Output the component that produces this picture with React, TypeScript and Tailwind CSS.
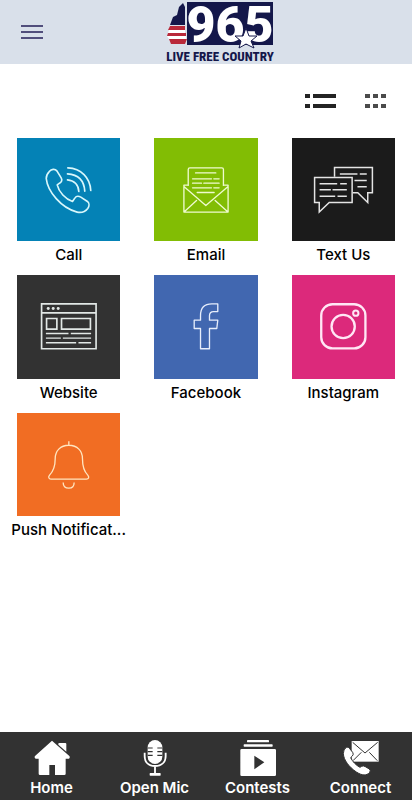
import type { ReactNode } from "react";

type Tile = { label: string; color: string; icon: ReactNode };
type Tab = { label: string; icon: ReactNode };

const tiles: Tile[] = [
  {
    label: "Call",
    color: "bg-[#0482b6]",
    icon: (
      <svg viewBox="51 21 311 311" className="size-full" fill="none" stroke="#d9f7fb" strokeWidth="5" strokeLinecap="round" strokeLinejoin="round" aria-hidden="true">
        <path d="M148 122C155 114 165 113 171 120L184 141C188 148 185 154 179 157L172 162C177 184 197 205 218 212L225 202C229 196 236 195 243 199L263 212C269 217 269 226 264 233C256 243 245 247 232 244C184 232 143 182 139 143C139 133 142 128 148 122Z" />
        <path d="M203 147C223 149 236 162 237 182M203 129C235 131 253 150 255 181M204 111C244 113 271 140 273 179" />
      </svg>
    ),
  },
  {
    label: "Email",
    color: "bg-[#82bd04]",
    icon: (
      <svg viewBox="42 21 311 311" className="size-full" fill="none" stroke="#effbcf" strokeWidth="4" strokeLinecap="round" strokeLinejoin="round" aria-hidden="true">
        <path d="M145 163V116Q145 111 150 111H246Q251 111 251 116V163" />
        <path d="M145 163L132 163V244H265V163H251M132 167L198 224L265 167M134 242L170 209M263 242L226 209" />
        <path d="M167 126H228M158 144H215M222 144H238M158 157H185M192 157H238M158 171H215M222 171H238M172 185H223" />
      </svg>
    ),
  },
  {
    label: "Text Us",
    color: "bg-[#1b1b1b]",
    icon: (
      <svg viewBox="51 21 311 311" className="size-full" fill="none" stroke="#e4e4e4" strokeWidth="4.5" aria-hidden="true">
        <path d="M119 140H232V215H163L133 244V215H119Z" />
        <path d="M179 138V110H293V186H279V215L249 186H234" />
        <path d="M134 159H187M196 159H216M134 177H168M173 177H216M134 196H181M188 196H216M195 129H248M255 129H276M239 149H276M248 168H276" />
      </svg>
    ),
  },
  {
    label: "Website",
    color: "bg-[#323232]",
    icon: (
      <svg viewBox="51 21 311 311" className="size-full" fill="none" stroke="#e2e8e6" strokeWidth="5" aria-hidden="true">
        <path d="M125 108H289V243H125ZM125 135H289" />
        <path d="M140 152H171V184H140ZM185 152H272V184H185Z" />
        <path d="M138 197H206M213 197H274M138 211H183M189 211H274M138 225H229M236 225H274" strokeWidth="4" />
        <g fill="#e2e8e6" stroke="none">
          <circle cx="145" cy="122" r="4.5" />
          <circle cx="160" cy="122" r="4.5" />
          <circle cx="175" cy="122" r="4.5" />
        </g>
      </svg>
    ),
  },
  {
    label: "Facebook",
    color: "bg-[#4167b0]",
    icon: (
      <svg viewBox="42 21 311 311" className="size-full" fill="none" stroke="#e6edfb" strokeWidth="4" strokeLinejoin="round" aria-hidden="true">
        <path d="M182 243V182H163V157H182V143C182 119 195 108 216 108H234V131H221C212 131 209 135 209 144V157H234L231 182H209V243Z" />
      </svg>
    ),
  },
  {
    label: "Instagram",
    color: "bg-[#dc297b]",
    icon: (
      <svg viewBox="51 21 311 311" className="size-full" fill="none" stroke="#ffe7f5" strokeWidth="7" aria-hidden="true">
        <rect x="139" y="109" width="133" height="133" rx="34" />
        <circle cx="205" cy="176" r="35" />
        <circle cx="243" cy="136" r="8" strokeWidth="6" />
      </svg>
    ),
  },
  {
    label: "Push Notificat...",
    color: "bg-[#f16d23]",
    icon: (
      <svg viewBox="51 21 311 311" className="size-full" fill="none" stroke="#ffe5c0" strokeWidth="4" strokeLinejoin="round" aria-hidden="true">
        <path d="M207 106V118M207 118C181 118 166 136 166 158C166 184 161 196 149 208C144 214 147 220 153 220H260C267 220 269 214 264 208C252 196 248 184 248 158C248 136 233 118 207 118ZM190 230C190 241 197 247 207 247S223 241 223 230" />
      </svg>
    ),
  },
];

const tabs: Tab[] = [
  {
    label: "Home",
    icon: (
      <svg viewBox="100 60 108 108" className="size-9" fill="#fff" aria-hidden="true">
        <path d="M154 62L206 108Q209 112 205 116H195V161Q195 165 191 165H163V135H146V165H118Q114 165 114 161V116H105Q100 113 103 108Z" />
        <path d="M173 71Q173 69 176 69H194Q197 69 197 72V95L173 74Z" />
      </svg>
    ),
  },
  {
    label: "Open Mic",
    icon: (
      <svg viewBox="409 60 108 108" className="size-9" aria-hidden="true">
        <rect x="441" y="60" width="44" height="72" rx="22" fill="#fff" />
        <path d="M441 84H456M441 95H456M441 106H456M470 84H485M470 95H485M470 106H485" stroke="#323232" strokeWidth="3.5" />
        <path d="M432 98V108C432 127 444 138 463 138S495 127 495 108V98M463 138V162" fill="none" stroke="#fff" strokeWidth="5.5" />
        <rect x="447" y="159" width="33" height="8" rx="2" fill="#fff" />
      </svg>
    ),
  },
  {
    label: "Contests",
    icon: (
      <svg viewBox="100 60 108 108" className="size-9" fill="#fff" aria-hidden="true">
        <rect x="121" y="60" width="66" height="7" rx="2" />
        <rect x="111" y="73" width="87" height="7" rx="2" />
        <path fillRule="evenodd" d="M105 87H204Q208 87 208 91V164Q208 168 204 168H105Q101 168 101 164V91Q101 87 105 87ZM143 107V148L173 127Z" />
      </svg>
    ),
  },
  {
    label: "Connect",
    icon: (
      <svg viewBox="409 60 108 108" className="size-9" aria-hidden="true">
        <path d="M435 63H516V125H435Z" fill="#fff" />
        <path d="M438 67L475 99L513 67M439 122L464 97M512 122L488 97" fill="none" stroke="#323232" strokeWidth="3" />
        <path d="M419 82Q425 79 429 86L438 97Q442 103 437 108L432 113C437 124 448 136 460 142L465 139Q470 136 476 140L488 147Q493 152 489 157C480 168 466 167 449 156C427 141 411 120 410 101Q410 88 419 82Z" fill="#fff" stroke="#323232" strokeWidth="3" />
      </svg>
    ),
  },
];

function Logo() {
  return (
    <svg viewBox="0 0 106 64" className="h-16 w-[106px] overflow-visible" role="img" aria-label="96.5 Live Free Country">
      <path d="M20 2H106V45H20Z" fill="#14174a" />
      <path d="M16 3L18 7V25H3L6 17L10 15L12 7Z" fill="#14174a" />
      <path d="M3 26H18V30H1ZM1 33H19V36H0ZM2 39H20L18 44H4Z" fill="#b9293a" />
      <path d="M2 30H18V33H1ZM0 36H19V39H2Z" fill="#fff" />
      <text x="63" y="42" textAnchor="middle" fill="#fff" className="font-[Roboto,'Liberation_Sans',sans-serif] text-[50px] font-black">
        965
      </text>
      <path d="M79 28L82 36L90 36L84 41L87 48L79 44L72 48L74 41L68 36L76 36Z" fill="#fff" stroke="#14174a" strokeWidth="1" />
      <text x="53" y="61" textAnchor="middle" fill="#14174a" className="font-['Roboto_Condensed','Liberation_Sans_Narrow','Liberation_Sans',sans-serif] text-[13px] font-extrabold">
        LIVE FREE COUNTRY
      </text>
    </svg>
  );
}

export default function App() {
  return (
    <div className="flex min-h-screen flex-col bg-white font-['Inter','Noto_Sans',sans-serif] text-black">
      <header className="grid h-16 grid-cols-[1fr_auto_1fr] items-center bg-[#d9e0ea] px-5">
        <button type="button" aria-label="Open menu" className="flex size-6 items-center justify-center">
          <svg viewBox="0 0 22 16" className="h-4 w-[22px]" fill="#514e7c" aria-hidden="true">
            <path d="M0 1H22V3H0ZM0 7H22V9H0ZM0 13H22V15H0Z" />
          </svg>
        </button>
        <div className="ml-7">
          <Logo />
        </div>
      </header>

      <main className="grow">
        <div className="flex h-[74px] items-center justify-end gap-7 pr-[25px]">
          <button type="button" aria-label="List view">
            <svg viewBox="0 0 32 16" className="h-4 w-8" fill="#242424" aria-hidden="true">
              <path d="M0 1H5V5H0ZM8 1H31V5H8ZM0 11H5V15H0ZM8 11H31V15H8Z" />
            </svg>
          </button>
          <button type="button" aria-label="Grid view">
            <svg viewBox="0 0 22 16" className="h-4 w-[22px]" fill="#4b4b4b" aria-hidden="true">
              <path d="M0 1H5V5H0ZM8 1H13V5H8ZM16 1H21V5H16ZM0 11H5V15H0ZM8 11H13V15H8ZM16 11H21V15H16Z" />
            </svg>
          </button>
        </div>
        <ul className="grid grid-cols-3">
          {tiles.map((tile) => (
            <li key={tile.label} className="mb-2 px-2">
              <button type="button" className="block w-full">
                <span className={`mx-[9px] block aspect-square ${tile.color}`}>{tile.icon}</span>
                <span className="mt-0.5 block truncate text-center text-[15px] leading-6 font-medium">{tile.label}</span>
              </button>
            </li>
          ))}
        </ul>
      </main>

      <nav className="sticky bottom-0 grid grid-cols-4 bg-[#323232] pt-2 text-white">
        {tabs.map((tab) => (
          <button key={tab.label} type="button" className="flex flex-col items-center">
            {tab.icon}
            <span className="text-[15px] leading-6 font-semibold">{tab.label}</span>
          </button>
        ))}
      </nav>
    </div>
  );
}
